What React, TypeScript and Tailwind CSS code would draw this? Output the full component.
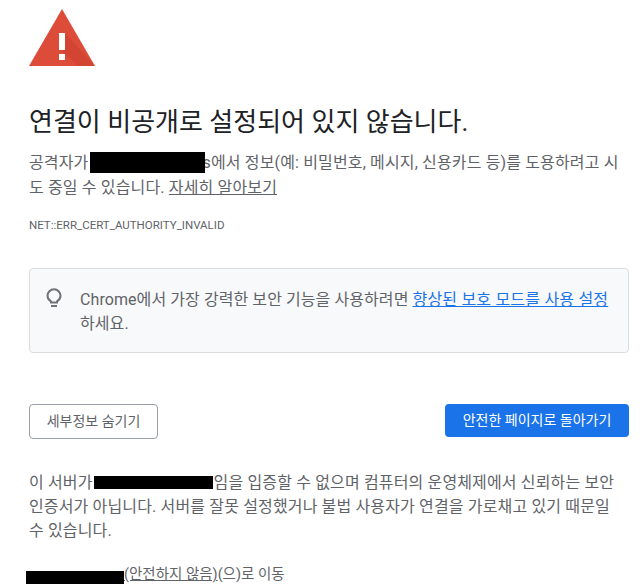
const font = { fontFamily: 'Roboto, "Noto Sans CJK KR", sans-serif' };

function WarningIcon() {
  return (
    <svg width="66" height="58" viewBox="0 0 66 58" className="block">
      <polygon points="33,0 66,57 0,57" fill="#dd4b39" />
      <polygon points="36,24 66,57 49,57 31,40" fill="#c53929" opacity="0.4" />
      <rect x="30" y="24" width="6" height="17" fill="#fff" />
      <rect x="30" y="45" width="6" height="6" fill="#fff" />
    </svg>
  );
}

function BulbIcon() {
  return (
    <svg width="16" height="20" viewBox="0 0 16 20" fill="none" className="block">
      <path
        d="M5 14.500v-1.200C3 12.200 1.500 10.200 1.500 7.800A6.500 6.500 0 0 1 14.500 7.800c0 2.400-1.500 4.400-3.500 5.500v1.200Z"
        stroke="#6f7276"
        strokeWidth="2"
      />
      <rect x="5" y="17" width="6" height="2" fill="#6f7276" />
    </svg>
  );
}

export default function App() {
  return (
    <div className="h-[587px] w-[640px] overflow-hidden bg-white pl-[29px] pr-[11px] pt-[9px] text-[#5f6368]" style={font}>
      <WarningIcon />

      <h1 className="mt-[39px] text-[26px] font-normal leading-[32px] whitespace-nowrap text-[#202124]">
        연결이 비공개로 설정되어 있지 않습니다.
      </h1>

      <p className="mt-[13px] text-[16px] leading-[24.500px] tracking-[0.15px]">
        <span className="block whitespace-nowrap">
          공격자가<span className="relative z-10 ml-[2px] inline-block h-[21px] w-[115px] bg-black align-[-5px]" />
          <span className="-ml-[3px]">s</span>에서 정보(예: 비밀번호, 메시지, 신용카드 등)를 도용하려고 시
        </span>
        <span className="block whitespace-nowrap">
          도 중일 수 있습니다. <a className="underline">자세히 알아보기</a>
        </span>
      </p>

      <div className="mt-[15px] text-[11.500px] leading-[20px]">NET::ERR_CERT_AUTHORITY_INVALID</div>

      <div className="mt-[33px] flex h-[85px] w-[600px] rounded-[4px] border border-[#dadce0] bg-[#f8f9fa] pl-[16px] pt-[15px]">
        <div className="mt-[4px] w-[34px] shrink-0">
          <BulbIcon />
        </div>
        <p className="mt-[4px] text-[16px] leading-[24px] tracking-[0.08px]">
          <span className="block whitespace-nowrap">
            Chrome에서 가장 강력한 보안 기능을 사용하려면 <a className="text-[#1a73e8] underline tracking-[0.2px]">향상된 보호 모드를 사용 설정</a>
          </span>
          <span className="block">하세요.</span>
        </p>
      </div>

      <div className="mt-[51px] flex w-[600px] items-start justify-between">
        <button className="h-[35px] w-[129px] rounded-[4px] border border-[#9aa0a6] bg-white text-[14px] text-[#5f6368]">
          세부정보 숨기기
        </button>
        <button className="h-[33px] w-[184px] rounded-[4px] bg-[#1a73e8] text-[14px] text-white">
          안전한 페이지로 돌아가기
        </button>
      </div>

      <p className="mt-[32px] text-[16px] leading-[24px] tracking-[0.15px]">
        <span className="block whitespace-nowrap">
          이 서버가<span className="ml-[1px] mr-[1px] inline-block h-[13px] w-[119px] bg-black align-[-1px]" />임을 입증할 수 없으며 컴퓨터의 운영체제에서 신뢰하는 보안
        </span>
        <span className="block whitespace-nowrap">
          인증서가 아닙니다. 서버를 잘못 설정했거나 불법 사용자가 연결을 가로채고 있기 때문일
        </span>
        <span className="block">수 있습니다.</span>
      </p>

      <p className="mt-[20px] whitespace-nowrap text-[14.500px] leading-[24px]">
        <span className="-ml-[3px] inline-block h-[13px] w-[98px] bg-black align-[-5px]" />
        <a className="underline">(안전하지 않음)</a>(으)로 이동
      </p>
    </div>
  );
}
